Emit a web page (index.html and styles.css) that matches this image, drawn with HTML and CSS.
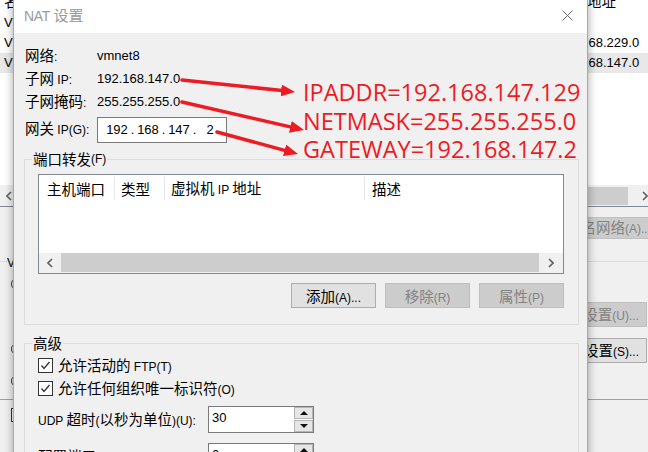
FILE: index.html
```html
<!DOCTYPE html>
<html lang="zh-CN">
<head>
<meta charset="utf-8">
<title>NAT 设置</title>
<link rel="stylesheet" href="styles.css">
</head>
<body>
<div class="desk">
  <div class="bgwin">
    <div class="list">
      <div class="lrow head"><span class="lc1"><span class="c">名称</span></span><span class="lgap"></span><span class="lc2"><span class="lt h"><span class="c">子网地址</span></span></span></div>
      <div class="lrow"><span class="lc1">VMnet0</span><span class="lgap"></span><span class="lc2"></span></div>
      <div class="lrow"><span class="lc1">VMnet1</span><span class="lgap"></span><span class="lc2"><span class="lt">192.168.229.0</span></span></div>
      <div class="lrow sel"><span class="lc1">VMnet8</span><span class="lgap"></span><span class="lc2"><span class="lt">192.168.147.0</span></span></div>
    </div>
    <div class="bgscroll">
      <span class="sarrow"><svg width="6" height="10" viewBox="0 0 6 10"><polyline points="5,1 1,5 5,9" fill="none" stroke="#606060" stroke-width="1.6"/></svg></span>
      <span class="bgthumb"></span>
      <span class="sarrow r"><svg width="6" height="10" viewBox="0 0 6 10"><polyline points="1,1 5,5 1,9" fill="none" stroke="#606060" stroke-width="1.6"/></svg></span>
    </div>
    <div class="bgpanel">
      <div class="bgbtnrow"><span class="bgbtn dis wide"><span class="bgtxt"><span class="c">重命名网络</span>(A)...</span></span></div>
      <div class="bggroup">
        <span class="bglegend">VMnet <span class="c">信息</span></span>
        <div class="bgcols">
          <div class="bgradios"><span class="radio r1"></span><span class="radio r2"></span><span class="radio r3"></span></div>
          <div class="bgbtns">
            <span class="bgbtn dis"><span class="bgtxt">DHCP <span class="c">设置</span>(U)...</span></span>
            <span class="bgbtn"><span class="bgtxt">NAT <span class="c">设置</span>(S)...</span></span>
          </div>
        </div>
      </div>
      <div class="bgsep"></div>
      <div class="bgcheck"><span class="bgcb"></span></div>
    </div>
  </div>

  <div class="dialog">
    <div class="titlebar">
      <span class="title">NAT <span class="c">设置</span></span>
      <svg class="close" width="11" height="11" viewBox="0 0 11 11"><path d="M0.5,0.5 L10.5,10.5 M10.5,0.5 L0.5,10.5" stroke="#6a6a6a" stroke-width="1" fill="none"/></svg>
    </div>
    <div class="dbody">
      <div class="info">
        <span class="lab"><span class="c">网络</span>:</span><span class="val">vmnet8</span>
        <span class="lab"><span class="c">子网</span> IP:</span><span class="val">192.168.147.0</span>
        <span class="lab"><span class="c">子网掩码</span>:</span><span class="val">255.255.255.0</span>
        <span class="lab gw"><span class="c">网关</span> IP(G):</span>
        <span class="ipbox"><span class="oct">192</span><span class="dot">.</span><span class="oct">168</span><span class="dot">.</span><span class="oct">147</span><span class="dot">.</span><span class="oct">2</span></span>
      </div>

      <div class="group pf">
        <span class="gtitle"><span class="c">端口转发</span>(F)</span>
        <div class="table">
          <div class="thead">
            <span class="th th1"><span class="c">主机端口</span></span>
            <span class="th th2"><span class="c">类型</span></span>
            <span class="th th3"><span class="c">虚拟机</span> IP <span class="c">地址</span></span>
            <span class="th th4"><span class="c">描述</span></span>
          </div>
          <div class="tbody"></div>
          <div class="hscroll">
            <span class="ha hl"><svg width="6" height="10" viewBox="0 0 6 10"><polyline points="5,1 1,5 5,9" fill="none" stroke="#606060" stroke-width="1.6"/></svg></span>
            <span class="hthumb"></span>
            <span class="ha hr"><svg width="6" height="10" viewBox="0 0 6 10"><polyline points="1,1 5,5 1,9" fill="none" stroke="#606060" stroke-width="1.6"/></svg></span>
          </div>
        </div>
        <div class="btns">
          <button class="btn" type="button"><span class="c">添加</span>(A)...</button>
          <button class="btn dis" type="button"><span class="c">移除</span>(R)</button>
          <button class="btn dis" type="button"><span class="c">属性</span>(P)</button>
        </div>
      </div>

      <div class="group adv">
        <span class="gtitle"><span class="c">高级</span></span>
        <div class="chk first">
          <span class="box"><svg width="13" height="13" viewBox="0 0 13 13"><polyline points="2.5,6.5 5,9.5 10.5,3" fill="none" stroke="#333" stroke-width="1.3"/></svg></span>
          <span><span class="c">允许活动的</span> FTP(T)</span>
        </div>
        <div class="chk">
          <span class="box"><svg width="13" height="13" viewBox="0 0 13 13"><polyline points="2.5,6.5 5,9.5 10.5,3" fill="none" stroke="#333" stroke-width="1.3"/></svg></span>
          <span><span class="c">允许任何组织唯一标识符</span>(O)</span>
        </div>
        <div class="spinrow first">
          <span class="slab">UDP <span class="c">超时</span>(<span class="c">以秒为单位</span>)(U):</span>
          <span class="spin"><span class="sval">30</span><span class="sbtns"><span class="sb up"></span><span class="sb down"></span></span></span>
        </div>
        <div class="spinrow second">
          <span class="slab"><span class="c">配置端口</span>(C):</span>
          <span class="spin"><span class="sval">0</span><span class="sbtns"><span class="sb up"></span><span class="sb down"></span></span></span>
        </div>
      </div>
    </div>
  </div>

  <div class="notes">
    <div>IPADDR=192.168.147.129</div>
    <div>NETMASK=255.255.255.0</div>
    <div>GATEWAY=192.168.147.2</div>
  </div>

  <svg class="arrows" width="648" height="452" viewBox="0 0 648 452">
    <defs>
      <marker id="ah" markerUnits="userSpaceOnUse" markerWidth="14" markerHeight="12" refX="1" refY="6" orient="auto">
        <path d="M0,0 L14,6 L0,12 z" fill="#ed1c24"/>
      </marker>
    </defs>
    <g stroke="#ed1c24" stroke-width="3.5" stroke-linecap="round" fill="none">
      <line x1="182" y1="80" x2="282.1" y2="90.6" marker-end="url(#ah)"/>
      <line x1="182" y1="102" x2="291.3" y2="127.1" marker-end="url(#ah)"/>
      <line x1="217" y1="132" x2="285.5" y2="150.6" marker-end="url(#ah)"/>
    </g>
  </svg>
</div>
</body>
</html>
```

FILE: styles.css
```css
html, body {
  margin: 0;
  padding: 0;
  width: 648px;
  height: 452px;
  overflow: hidden;
}
body {
  font-family: "Liberation Sans", "Noto Sans CJK SC", sans-serif;
  font-size: 12px;
  line-height: 18px;
  color: #000;
  background: #f0f0f0;
}
.c {
  font-family: "Noto Sans CJK SC", sans-serif;
  font-size: 14.5px;
}
button {
  font: inherit;
  line-height: inherit;
  margin: 0;
  padding: 0;
  color: inherit;
}
.desk {
  position: relative;
  width: 648px;
  height: 452px;
  overflow: hidden;
}

/* ---------- background window ---------- */
.bgwin {
  width: 648px;
  height: 452px;
  background: #f0f0f0;
}
.list {
  height: 185px;
  background: #fff;
  overflow: hidden;
}
.lrow {
  display: grid;
  grid-template-columns: 13px 575px 60px;
  height: 20px;
  line-height: 20px;
  font-size: 13px;
  white-space: nowrap;
}
.lrow.head {
  height: 24px;
  line-height: 24px;
  margin-top: -11px;
}
.lrow.sel { background: #e8e8e8; }
.lc1 {
  padding-left: 4px;
  overflow: hidden;
}
.lc2 {
  overflow: hidden;
}
.lt {
  display: inline-block;
  margin-left: -32px;
}
.lt.h { margin-left: -30px; }
.bgscroll {
  height: 21px;
  border-bottom: 1px solid #828790;
  display: flex;
  align-items: center;
}
.sarrow {
  width: 18px;
  height: 21px;
  display: flex;
  align-items: center;
  justify-content: center;
  flex: none;
}
.sarrow.r { margin-left: 8px; }
.bgthumb {
  width: 610px;
  height: 18px;
  margin-top: 1px;
  background: #cdcdcd;
  flex: none;
}
.bgbtnrow {
  display: flex;
  justify-content: flex-end;
  margin: 10px -3px 0 0;
}
.bgbtn {
  height: 25px;
  width: 59px;
  box-sizing: border-box;
  border: 1px solid #adadad;
  border-left: 0;
  background: #e1e1e1;
  padding-right: 7px;
  display: flex;
  justify-content: flex-end;
  align-items: center;
  overflow: hidden;
  white-space: nowrap;
}
.bgbtn.wide {
  height: 22px;
  width: 63px;
  padding-right: 0;
  border-right: 0;
}
.bgtxt { flex: none; }
.bgbtn.dis {
  background: #cccccc;
  border-color: #bfbfbf;
  color: #838383;
}
.bggroup {
  margin-top: 22px;
  height: 138px;
  box-sizing: border-box;
  border-top: 1px solid #dcdcdc;
}
.bglegend {
  display: block;
  width: 6px;
  height: 18px;
  overflow: hidden;
  white-space: nowrap;
  margin: -10px 0 0 7px;
  line-height: 18px;
  background: #f0f0f0;
}
.bgcols {
  display: flex;
  justify-content: space-between;
}
.bgradios {
  display: flex;
  flex-direction: column;
}
.radio {
  width: 12px;
  height: 12px;
  box-sizing: border-box;
  border: 1px solid #333;
  border-radius: 50%;
  background: #fff;
  margin-left: 11px;
}
.radio.r1 { margin-top: 8px; }
.radio.r2 { margin-top: 53px; }
.radio.r3 { margin-top: 20px; }
.bgbtns {
  display: flex;
  flex-direction: column;
  align-items: flex-end;
  gap: 11px;
  margin: 32px 1px 0 0;
}
.bgsep {
  border-top: 1px solid #a0a0a0;
}
.bgcheck { padding: 8px 0 0 11px; }
.bgcb {
  display: block;
  width: 14px;
  height: 14px;
  box-sizing: border-box;
  border: 1px solid #333;
  background: #fff;
}

/* ---------- dialog ---------- */
.dialog {
  position: absolute;
  left: 13px;
  top: 0;
  width: 575px;
  height: 480px;
  box-sizing: border-box;
  border: 1px solid #a8a8a8;
  border-top: 0;
  background: #f0f0f0;
  box-shadow: 0 0 9px rgba(0, 0, 0, 0.35);
}
.titlebar {
  height: 33px;
  box-sizing: border-box;
  background: #fff;
  display: flex;
  align-items: center;
  justify-content: space-between;
  padding: 0 14px 3px 10px;
}
.title {
  font-size: 14px;
  letter-spacing: -0.3px;
  color: #9a9a9a;
}
.title .c { font-size: 15px; letter-spacing: 0; }
.close { display: block; }
.dbody {
  padding: 11px 8px 0 10px;
}
.info {
  display: grid;
  grid-template-columns: 72px auto;
  grid-template-rows: 23px 23px 23px 30px;
  align-items: center;
  justify-items: start;
  padding-left: 1px;
}
.val { font-size: 13px; }
.lab.gw {
  align-self: end;
  line-height: 26px;
}
.ipbox {
  align-self: end;
  display: flex;
  align-items: center;
  width: 130px;
  height: 26px;
  box-sizing: border-box;
  border: 1px solid #7a7a7a;
  background: #fff;
  padding-left: 7px;
  font-size: 13px;
}
.oct { width: 24px; text-align: center; }
.dot { width: 7px; text-align: center; }

.group {
  border: 1px solid #dcdcdc;
  padding: 0 14px 16px 13px;
}
.pf { margin-top: 16px; }
.adv { margin-top: 18px; height: 200px; }
.gtitle {
  display: flex;
  align-items: center;
  width: fit-content;
  height: 18px;
  margin: -10px 0 0 -6px;
  padding: 0 1px;
  background: #f0f0f0;
  white-space: nowrap;
}
.table {
  margin-top: 6px;
  height: 100px;
  box-sizing: border-box;
  border: 1px solid #828790;
  background: #fff;
  display: flex;
  flex-direction: column;
}
.thead {
  display: flex;
  height: 25px;
  flex: none;
}
.th {
  height: 23px;
  margin-top: 2px;
  box-sizing: border-box;
  border-right: 1px solid #e5e5e5;
  white-space: nowrap;
  display: flex;
  align-items: center;
  gap: 0;
}
.th1 { width: 76px; padding-left: 8px; }
.th2 { width: 50px; padding-left: 6px; }
.th3 { width: 200px; padding-left: 6px; display: block; line-height: 21px; }
.th4 { flex: 1; padding-left: 7px; border-right: 0; }
.tbody { flex: 1; }
.hscroll {
  height: 20px;
  flex: none;
  display: flex;
  background: #f0f0f0;
}
.ha {
  display: flex;
  align-items: center;
  justify-content: center;
  flex: none;
}
.hl { width: 22px; }
.hr { width: 24px; }
.hthumb {
  flex: 1;
  background: #cdcdcd;
  margin-bottom: 1px;
}
.btns {
  display: flex;
  justify-content: flex-end;
  gap: 9px;
  margin-top: 9px;
}
.btn {
  width: 85px;
  height: 25px;
  line-height: 23px;
  box-sizing: border-box;
  border: 1px solid #adadad;
  background: #e1e1e1;
  text-align: center;
}
.btn.dis {
  background: #cccccc;
  border-color: #bfbfbf;
  color: #838383;
}
.chk {
  display: flex;
  align-items: center;
  height: 23px;
}
.chk.first { margin-top: 2px; }
.box {
  width: 15px;
  height: 15px;
  box-sizing: border-box;
  border: 1px solid #333;
  background: #fff;
  margin-right: 5px;
  display: flex;
  flex: none;
}
.spinrow {
  display: flex;
  align-items: center;
  height: 27px;
}
.spinrow.first { margin-top: 6px; }
.spinrow.second { margin-top: 10px; }
.slab {
  width: 170px;
  white-space: nowrap;
}
.spin {
  width: 106px;
  height: 27px;
  box-sizing: border-box;
  border: 1px solid #7a7a7a;
  background: #fff;
  display: flex;
}
.sval {
  flex: 1;
  padding: 2px 0 0 3px;
  line-height: 18px;
  font-size: 13px;
}
.sbtns {
  width: 19px;
  display: flex;
  flex-direction: column;
  gap: 1px;
}
.sb {
  height: 12px;
  box-sizing: border-box;
  border: 1px solid #b5b5b5;
  background: #e6e6e6;
  display: flex;
  align-items: center;
  justify-content: center;
}
.sb::before {
  content: "";
  width: 0;
  height: 0;
  border-left: 4px solid transparent;
  border-right: 4px solid transparent;
}
.sb.up::before { border-bottom: 4px solid #111; }
.sb.down::before { border-top: 4px solid #111; }

/* ---------- annotations ---------- */
.notes {
  position: absolute;
  left: 303px;
  top: 78px;
  font-family: "Open Sans", "Liberation Sans", sans-serif;
  font-size: 23.5px;
  line-height: 28.7px;
  color: #ed1c24;
  white-space: nowrap;
}
.arrows {
  position: absolute;
  left: 0;
  top: 0;
  pointer-events: none;
}
```
